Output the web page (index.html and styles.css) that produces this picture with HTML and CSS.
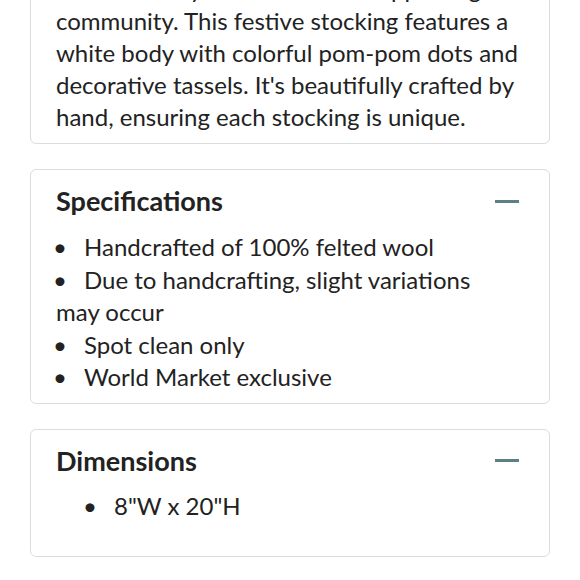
FILE: index.html
```html
<!DOCTYPE html>
<html lang="en">
<head>
<meta charset="utf-8">
<link rel="stylesheet" href="styles.css">
</head>
<body>
<main class="page">
  <section class="card card-desc">
    <p class="desc">Handmade by skilled artisans supporting a local<br>community. This festive stocking features a<br>white body with colorful pom-pom dots and<br>decorative tassels. It's beautifully crafted by<br>hand, ensuring each stocking is unique.</p>
  </section>
  <section class="card">
    <div class="card-head">
      <h2 class="card-title">Specifications</h2>
      <span class="minus"></span>
    </div>
    <div class="specs">
      <p class="spec"><span class="dot">•</span>Handcrafted of 100% felted wool</p>
      <p class="spec"><span class="dot">•</span>Due to handcrafting, slight variations<br>may occur</p>
      <p class="spec"><span class="dot">•</span>Spot clean only</p>
      <p class="spec"><span class="dot">•</span>World Market exclusive</p>
    </div>
  </section>
  <section class="card card-dim">
    <div class="card-head">
      <h2 class="card-title">Dimensions</h2>
      <span class="minus"></span>
    </div>
    <div class="dims">
      <p class="spec"><span class="dot">•</span>8"W x 20"H</p>
    </div>
  </section>
</main>
</body>
</html>
```
FILE: styles.css
```css
html, body {
  margin: 0;
  padding: 0;
  background: #ffffff;
}
body {
  font-family: "Lato", "Open Sans", sans-serif;
  color: #222222;
}
.page {
  display: flex;
  flex-direction: column;
  gap: 25px;
  padding: 0 30px;
  margin-top: -43px;
}
.card {
  border: 1px solid #dcdcdc;
  border-radius: 6px;
  padding: 15px 20px 9px 25px;
}
.card-desc {
  border-top-left-radius: 0;
  border-top-right-radius: 0;
  padding-bottom: 10px;
}
.desc {
  margin: 0;
  font-size: 24px;
  line-height: 32px;
  white-space: nowrap;
}
.card-head {
  display: flex;
  justify-content: space-between;
  align-items: center;
  height: 32px;
}
.card-title {
  margin: 0;
  font-size: 27px;
  font-weight: 700;
  line-height: 32px;
}
.minus {
  width: 24px;
  height: 3px;
  background: #5b8184;
  margin-right: 10px;
}
.specs {
  margin-top: 14px;
}
.spec {
  margin: 0;
  font-size: 24px;
  line-height: 32.5px;
  white-space: nowrap;
}
.dot {
  display: inline-block;
  width: 31px;
  margin-left: -3px;
  text-align: left;
}
.dims {
  margin: 13px 0 25px;
  padding-left: 30px;
}
```
